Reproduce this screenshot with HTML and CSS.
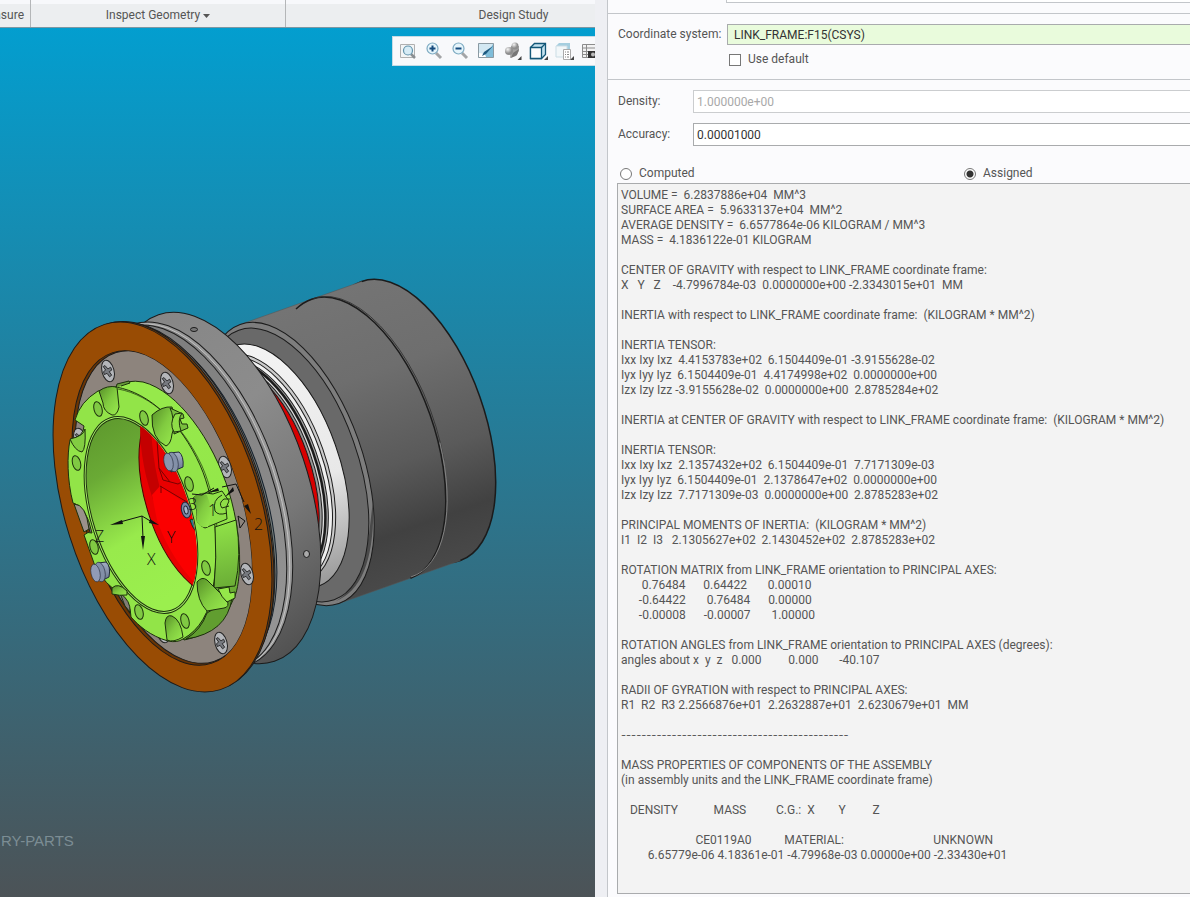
FILE: index.html
```html
<!DOCTYPE html>
<html lang="en">
<head>
<meta charset="utf-8">
<title>Mass Properties</title>
<link rel="stylesheet" href="styles.css">
</head>
<body>
<div class="app">
  <section class="workspace">
    <nav class="ribbon">
      <span class="group group-measure">Measure</span>
      <button class="group group-inspect" type="button">Inspect Geometry<svg width="7" height="4" viewBox="0 0 7 4"><path d="M0 0h7L3.500 4z" fill="#555"/></svg></button>
      <span class="group group-study">Design Study</span>
    </nav>
    <div class="viewport">
      <svg class="model" viewBox="0 28 595 869" preserveAspectRatio="xMinYMin meet" role="img" aria-label="Assembly model">
        <defs>
          <linearGradient id="body" gradientUnits="userSpaceOnUse" x1="0" y1="-148" x2="0" y2="148">
            <stop offset="0" stop-color="#747474"/><stop offset=".3" stop-color="#6e6e6e"/><stop offset=".62" stop-color="#5a5a5a"/><stop offset=".84" stop-color="#414141"/><stop offset="1" stop-color="#494949"/>
          </linearGradient>
          <linearGradient id="flange" gradientUnits="userSpaceOnUse" x1="180" y1="310" x2="300" y2="660">
            <stop offset="0" stop-color="#868686"/><stop offset=".35" stop-color="#8c8c8c"/><stop offset=".65" stop-color="#777"/><stop offset="1" stop-color="#4d4d4d"/>
          </linearGradient>
          <linearGradient id="groove" gradientUnits="userSpaceOnUse" x1="160" y1="320" x2="280" y2="660">
            <stop offset="0" stop-color="#7c7c7c"/><stop offset=".6" stop-color="#898989"/><stop offset="1" stop-color="#979797"/>
          </linearGradient>
          <linearGradient id="white" x1="0" y1="0" x2="0" y2="1">
            <stop offset="0" stop-color="#f4f4f4"/><stop offset=".6" stop-color="#e8e8e8"/><stop offset="1" stop-color="#999"/>
          </linearGradient>
          <linearGradient id="bore" gradientUnits="userSpaceOnUse" x1="105" y1="420" x2="150" y2="600">
            <stop offset="0" stop-color="#5f9a2e"/><stop offset=".25" stop-color="#6aaa35"/><stop offset=".62" stop-color="#98ea4c"/><stop offset="1" stop-color="#9bef4e"/>
          </linearGradient>
          <linearGradient id="side" gradientUnits="userSpaceOnUse" x1="180" y1="400" x2="225" y2="620">
            <stop offset="0" stop-color="#96e94b"/><stop offset=".55" stop-color="#93e649"/><stop offset=".8" stop-color="#72b83a"/><stop offset="1" stop-color="#5c962c"/>
          </linearGradient>
          <linearGradient id="notch" x1="0" y1="0" x2="1" y2="1">
            <stop offset="0" stop-color="#578f28"/><stop offset=".5" stop-color="#81cb40"/><stop offset="1" stop-color="#99eb4d"/>
          </linearGradient>
          <linearGradient id="pin" x1="0" y1="0" x2="0" y2="1">
            <stop offset="0" stop-color="#a4afc4"/><stop offset="1" stop-color="#66738e"/>
          </linearGradient>
          <clipPath id="boreClip"><ellipse cx="141" cy="515" rx="49" ry="101" transform="rotate(-17.6 141 515)"/></clipPath>
          <clipPath id="ringClip"><ellipse cx="162" cy="508" rx="79" ry="163" transform="rotate(-17.6 162 508)"/></clipPath>
          <g id="screw">
            <ellipse rx="6" ry="11" fill="#b4b6ba" stroke="#222"/>
            <path d="M-1.500-6l2 4 3-1 .5 3-3 1 1.500 4-2.500 1-1.500-4-3 .5v-3l2.500-1-1.500-4z" fill="#777a80" stroke="#222" stroke-width=".8"/>
          </g>
          <ellipse id="hole" rx="4" ry="7.500" fill="#80c943" stroke="#1d300d"/>
        </defs>

        <g stroke="#1b1b1b" stroke-width="1">
          <g transform="translate(411 421) rotate(-19.500)">
            <ellipse rx="73" ry="148" fill="url(#body)" stroke-width="1.500"/>
            <path d="M0-148H-128V148H0z" fill="url(#body)" stroke="none"/>
            <path d="M0-148h-128M0 148h-128" stroke="#555" stroke-width=".5"/>
            <path d="M-71-144Q-62-148-53-148A73 148 0 0 1-53 148" fill="none" stroke-width="1.500"/>
            <path d="M-51-148A73 148 0 0 1 18 48" fill="none" stroke="#333" stroke-width=".8"/>
            <path d="M20 30A72 147 0 0 1-52 147" fill="none" stroke="#8b8b8b" stroke-width=".8"/>
          </g>
          <ellipse cx="289.500" cy="464" rx="73" ry="148" transform="rotate(-19.500 289.500 464)" fill="#7d7d7d"/>
          <path d="M373 500Q376 585 336 601Q360 588 369 535z" fill="#4a4a4a" stroke="none"/>
          <ellipse cx="286.500" cy="465" rx="71" ry="143" transform="rotate(-19.500 286.500 465)" fill="#696969"/>
          <ellipse cx="276" cy="466" rx="63" ry="127.500" transform="rotate(-19.500 276 466)" fill="url(#white)"/>
          <g fill="none">
            <ellipse cx="268" cy="468" rx="58" ry="119" transform="rotate(-19.500 268 468)" fill="#ccc"/>
            <ellipse cx="266" cy="469" rx="57" ry="117" transform="rotate(-19.500 266 469)" fill="#f0f0f0"/>
            <ellipse cx="263" cy="470" rx="56" ry="115" transform="rotate(-19.500 263 470)" fill="#aaa"/>
            <ellipse cx="261" cy="470" rx="55" ry="114" transform="rotate(-19.500 261 470)" stroke-width="2.500" fill="#ddd"/>
            <ellipse cx="258" cy="471" rx="55" ry="113" transform="rotate(-19.500 258 471)" fill="#999"/>
            <ellipse cx="255" cy="471" rx="55" ry="113" transform="rotate(-19.500 255 471)" fill="#d80000"/>
          </g>

          <ellipse cx="216.500" cy="488" rx="91.500" ry="182.700" transform="rotate(-18.500 216.500 488)" fill="url(#flange)"/>
          <ellipse cx="190" cy="495" rx="90" ry="180" transform="rotate(-18.500 190 495)" fill="#999"/>
          <ellipse cx="188" cy="496" rx="89" ry="179" transform="rotate(-18.500 188 496)" fill="url(#groove)" stroke="#ddd" stroke-width=".6"/>
          <ellipse cx="185" cy="497" rx="89" ry="179" transform="rotate(-18.500 185 497)" fill="url(#groove)"/>
          <ellipse cx="175" cy="500" rx="89" ry="180" transform="rotate(-18.500 175 500)" fill="#737b7a" stroke="#14202c"/>
          <path d="M217 400Q269 482 273 555" fill="none" stroke="#51a62c" stroke-width="1.500"/>
          <ellipse cx="168" cy="504" rx="95" ry="188" transform="rotate(-17.600 168 504)" fill="#777168"/>
          <ellipse cx="165" cy="506" rx="97" ry="191" transform="rotate(-17.600 165 506)" fill="#6e3a0b"/>
          <ellipse cx="162.500" cy="507" rx="97.400" ry="191.600" transform="rotate(-17.600 162.500 507)" fill="#994c04"/>
          <ellipse cx="162" cy="508" rx="79" ry="163" transform="rotate(-17.600 162 508)" fill="#6a3504"/>
          <g clip-path="url(#ringClip)"><ellipse cx="165" cy="507" rx="79" ry="162" transform="rotate(-17.600 165 507)" fill="#8d847d"/></g>
          <ellipse cx="306.500" cy="554" rx="3" ry="3.500" fill="#aaa"/>
          <ellipse cx="194" cy="329.500" rx="3.500" ry="2" fill="#777"/>
        </g>

        <g>
          <use href="#screw" transform="translate(108 371) rotate(-15)"/>
          <use href="#screw" transform="translate(167 383) rotate(-15)"/>
          <use href="#screw" transform="translate(225 467) rotate(-15)"/>
          <use href="#screw" transform="translate(247 574) rotate(-15)"/>
          <use href="#screw" transform="translate(221 643) rotate(-15)"/>
          <use href="#screw" transform="translate(80 439) rotate(-15)"/>
          <use href="#screw" transform="translate(163 632) rotate(-15)"/>
        </g>

        <g stroke="#1d300d" stroke-width="1" stroke-linejoin="round">
          <path d="M116 387Q127 379 143 382C178 391 213 440 229 492C245 545 240 590 233 600C222 626 207 635 184 640L160 600 130 400z" fill="url(#side)"/>
          <path d="M75 420Q80 402 98 391L116 387C150 393 181 423 200 465C217 503 219 555 213 588Q208 625 183 639Q177 643 168 641C150 636 138 625 131 617Q131 603 119 592Q106 586 95 566L84 535Q88 531 92 533Q86 505 73 503C67 480 67 455 70 440Q84 436 84 426z" fill="#92e448"/>
          <path d="M118 389C152 395 183 425 202 466C219 504 221 555 215 588" fill="none" stroke-width=".7"/>
          <path d="M215 527L236 520Q242 556 235 586L214 588Q217 557 215 527z" fill="url(#side)"/>
          <path d="M207 613L232 598Q227 633 186 639Q201 630 207 613z" fill="#619e30"/>
          <path d="M74 504Q86 504 89 529L84 532Z" fill="#9a928b"/>
          <path d="M120 593Q131 601 130 612L125 606z" fill="#817b77"/>

          <ellipse cx="141" cy="515" rx="50" ry="102" transform="rotate(-17.600 141 515)" fill="#a7ef68"/>
          <ellipse cx="141" cy="515" rx="48" ry="100" transform="rotate(-17.600 141 515)" fill="url(#bore)"/>
          <g clip-path="url(#boreClip)">
            <ellipse cx="195" cy="498" rx="49" ry="102" transform="rotate(-17.600 195 498)" fill="#e80000" stroke="#4c0000"/>
            <path d="M140 426C140 470 155 525 199 586L204 580C165 525 153 475 151 426z" fill="#c40000" stroke="none"/>
            <path d="M157 520Q170 558 198 586L202 540 188 505 160 486 152 495z" fill="#fb0000" stroke="none"/>
            <path d="M157 440L159 468 163 480 178 484 189 478M159 468L170 482M161 486V493M160 486L187 502" fill="none" stroke="#790000"/>
            <path d="M192 519L198 526V533Q193 530 190 520z" fill="#277b93"/>
          </g>

          <path d="M99 391Q107 385 117 387L119 407Q117 416 112 415Q103 411 103 403z" fill="url(#notch)"/>
          <path d="M116 388L117 384 129 381 130 383 121 386" fill="#689b3a"/>
          <path d="M152 415Q162 406 172 407Q177 422 172 434Q171 444 166 446Q151 439 152 415z" fill="url(#notch)"/>
          <path d="M170 408L183 414 184 418 180 419 182 424 187 424 188 428 174 434Q174 416 170 408z" fill="#79be3e"/>
          <path d="M175 414Q169 424 174 432L181 431Q177 420 182 413z" fill="#8fde48"/>
          <path d="M70 439Q84 436 85 429Q86 449 82 452Q75 451 70 439z" fill="#82cc42"/>
          <path d="M112 588Q118 582 127 591V595Q120 596 112 594z" fill="url(#notch)"/>
          <path d="M165 623Q166 614 172 616Q181 620 183 637Q173 643 167 640z" fill="url(#notch)"/>
          <path d="M197 582Q202 576 207 580L227 600Q230 607 224 608L207 611Q197 601 197 582z" fill="url(#notch)"/>
          <path d="M218 589L229 587 230 593 235 592V598L227 602Q222 598 218 589z" fill="#95e84a"/>
          <path d="M193 498Q200 491 213 494L222 491 229 501 226 508 227 519 205 528Q194 524 197 511z" fill="#8fdf47"/>
          <path d="M193 498Q200 491 207 495Q214 512 208 527H203Q194 524 197 511z" fill="url(#notch)" stroke="none"/>
          <path d="M222 495Q212 500 215 511Q218 516 227 513M230 499H224Q218 503 222 508L229 506" fill="none"/>
          <path d="M192 494L202 495 214 488" fill="none" stroke="#111"/>

          <use href="#hole" transform="translate(98 409) rotate(-15)"/>
          <use href="#hole" transform="translate(144 418) rotate(-15)"/>
          <use href="#hole" transform="translate(76.500 463) rotate(-15)"/>
          <use href="#hole" transform="translate(189 484) rotate(-15)"/>
          <use href="#hole" transform="translate(94 547) rotate(-15)"/>
          <use href="#hole" transform="translate(139 612) rotate(-15)"/>
          <use href="#hole" transform="translate(185 621) rotate(-15)"/>
          <use href="#hole" transform="translate(206 568) rotate(-15)"/>
        </g>

        <g stroke="#222a3a" stroke-width="1">
          <path d="M169 453L179 452Q184 456 183 467L171 472z" fill="url(#pin)"/>
          <ellipse cx="173" cy="462" rx="5" ry="10" transform="rotate(-12 173 462)" fill="#8390a8" stroke-width=".6"/>
          <ellipse cx="168.500" cy="462" rx="4.500" ry="9" transform="rotate(-12 168.500 462)" fill="#8995ae" stroke-width=".6"/>
          <path d="M98 563L106 562Q111 566 109 577L101 581z" fill="url(#pin)"/>
          <ellipse cx="100" cy="572" rx="5" ry="10" transform="rotate(-12 100 572)" fill="#8390a8" stroke-width=".6"/>
          <ellipse cx="95.500" cy="573" rx="4.500" ry="9" transform="rotate(-12 95.500 573)" fill="#919bb6" stroke-width=".6"/>
          <ellipse cx="186" cy="510" rx="4.500" ry="8" transform="rotate(-12 186 510)" fill="#7787a5"/>
          <ellipse cx="186" cy="510" rx="2" ry="4" transform="rotate(-12 186 510)" fill="#a9b7cb"/>
        </g>

        <g stroke="#111" fill="#111">
          <path d="M142 516L120 522M142 516L143 538M142 516L152 522M236 484L222 487M236 484L244 502" fill="none"/>
          <path d="M110 525l12-5 1 4zM143 550l-2-14h4zM159 525l-9-6-1 4zM207 493l11-5 1 3zM251 514l-7-8 4-2zM225 497l8-10 1 4z" stroke="none"/>
          <path d="M238 516L240 528 245 521z" fill="none"/>
        </g>
        <g class="axis">
          <text x="95" y="542">Z</text><text x="147" y="565">X</text><text x="167" y="543">Y</text>
          <text x="188" y="510">3</text><text x="208" y="516">1</text><text x="254" y="530">2</text>
        </g>
        <text class="watermark" x="1" y="846">RY-PARTS</text>
      </svg>

      <div class="toolbar">
        <button type="button" aria-label="Refit"><svg viewBox="0 0 20 20"><path d="M2.500 3.500h14v13h-14z" fill="#f3f5f6" stroke="#b0b0b0"/><path d="M13 13l4 4" stroke="#8a8f93" stroke-width="2.500"/><circle cx="10" cy="9.500" r="4.500" fill="#d7ecf6" stroke="#6293ab" stroke-width="1.200"/></svg></button>
        <button type="button" aria-label="Zoom in"><svg viewBox="0 0 20 20"><path d="M12 12l5 5" stroke="#a3a5a7" stroke-width="3"/><circle cx="8.500" cy="7.500" r="5.500" fill="#e6f5fb" stroke="#7eabc2" stroke-width="1.200"/><path d="M5.500 7.500h6M8.500 4.500v6" stroke="#164b7e" stroke-width="2"/></svg></button>
        <button type="button" aria-label="Zoom out"><svg viewBox="0 0 20 20"><path d="M12 12l5 5" stroke="#a3a5a7" stroke-width="3"/><circle cx="8.500" cy="7.500" r="5.500" fill="#e6f5fb" stroke="#7eabc2" stroke-width="1.200"/><path d="M5.500 7.500h6" stroke="#164b7e" stroke-width="2"/></svg></button>
        <button type="button" aria-label="Repaint"><svg viewBox="0 0 20 20"><path d="M2.500 2.500h15v14h-15z" fill="#7fbdd9" stroke="#8b9aa2"/><path d="M3 3h14Q14 11 3 14z" fill="#d3e8f2"/><path d="M3 12l6 1 1 3H3z" fill="#fff"/><path d="M17 5L10 13l-4 2 2-4z" fill="#1d5a80"/></svg></button>
        <button type="button" aria-label="Shading"><svg viewBox="0 0 20 20"><defs><radialGradient id="ball" cx=".35" cy=".3"><stop offset="0" stop-color="#f5f5f5"/><stop offset="1" stop-color="#8e8e8e"/></radialGradient></defs><path d="M9 5h8v5l-3 5-6 2z" fill="#a2a2a2"/><path d="M11 12l6-4-2 6-6 3z" fill="#777"/><circle cx="13" cy="5" r="3.500" fill="url(#ball)"/><circle cx="7" cy="10" r="4" fill="url(#ball)"/><path d="M19.500 15v4h-4z" fill="#444"/></svg></button>
        <button type="button" aria-label="Display style"><svg viewBox="0 0 20 20"><path d="M2.500 6.500l4-4h11v11l-4 4h-11z" fill="#c3e2ef" stroke="#135778" stroke-width="1.300"/><path d="M2.500 6.500h11v11h-11z" fill="#fafcfd" stroke="#135778" stroke-width="1.300"/><path d="M13.500 6.500l4-4" stroke="#135778" stroke-width="1.300"/><path d="M20 15v4h-4z" fill="#444"/></svg></button>
        <button type="button" aria-label="Saved views"><svg viewBox="0 0 20 20"><path d="M2 5l3-3h11v11l-3 3H2z" fill="#a5cedf"/><path d="M2 5h11v11H2z" fill="#f2f7f9" stroke="#cbdde5"/><path d="M9.500 8.500h7v10h-7z" fill="#fff" stroke="#aaa"/><path d="M11 11h1m1 0h2M11 13.500h1m1 0h2M11 16h1m1 0h2" stroke="#888"/><path d="M20 15v4h-4z" fill="#444"/></svg></button>
        <button type="button" aria-label="View manager"><svg viewBox="0 0 20 20"><path d="M2.500 3.500h14v13h-14zM6.500 3.500v13M2.500 7h14M2.500 10.500h14M2.500 13.500h14" fill="#f2f2f2" stroke="#8c8c8c"/><path d="M8 10h10v7H8z" fill="#333"/><circle cx="13" cy="13.500" r="2" fill="#bbb"/></svg></button>
      </div>
    </div>
  </section>

  <main class="panel">
    <div class="previous"><div class="previous-box"></div></div>
    <section class="csys">
      <label for="csys">Coordinate system:</label>
      <input id="csys" class="csys-input" type="text" value="LINK_FRAME:F15(CSYS)">
      <label class="choice default"><input type="checkbox"> Use default</label>
    </section>
    <section class="settings">
      <label for="density">Density:</label>
      <input id="density" type="text" value="1.000000e+00" disabled>
      <label for="accuracy">Accuracy:</label>
      <input id="accuracy" type="text" value="0.00001000">
    </section>
    <div class="modes">
      <label class="choice"><input type="radio" name="mode"> Computed</label>
      <label class="choice"><input type="radio" name="mode" checked> Assigned</label>
    </div>
    <pre class="report">VOLUME =  6.2837886e+04  MM^3
SURFACE AREA =  5.9633137e+04  MM^2
AVERAGE DENSITY =  6.6577864e-06 KILOGRAM / MM^3
MASS =  4.1836122e-01 KILOGRAM

CENTER OF GRAVITY with respect to LINK_FRAME coordinate frame:
X   Y   Z    -4.7996784e-03  0.0000000e+00 -2.3343015e+01  MM

INERTIA with respect to LINK_FRAME coordinate frame:  (KILOGRAM * MM^2)

INERTIA TENSOR:
Ixx Ixy Ixz  4.4153783e+02  6.1504409e-01 -3.9155628e-02
Iyx Iyy Iyz  6.1504409e-01  4.4174998e+02  0.0000000e+00
Izx Izy Izz -3.9155628e-02  0.0000000e+00  2.8785284e+02

INERTIA at CENTER OF GRAVITY with respect to LINK_FRAME coordinate frame:  (KILOGRAM * MM^2)

INERTIA TENSOR:
Ixx Ixy Ixz  2.1357432e+02  6.1504409e-01  7.7171309e-03
Iyx Iyy Iyz  6.1504409e-01  2.1378647e+02  0.0000000e+00
Izx Izy Izz  7.7171309e-03  0.0000000e+00  2.8785283e+02

PRINCIPAL MOMENTS OF INERTIA:  (KILOGRAM * MM^2)
I1  I2  I3   2.1305627e+02  2.1430452e+02  2.8785283e+02

ROTATION MATRIX from LINK_FRAME orientation to PRINCIPAL AXES:
       0.76484      0.64422       0.00010
      -0.64422       0.76484      0.00000
      -0.00008      -0.00007       1.00000

ROTATION ANGLES from LINK_FRAME orientation to PRINCIPAL AXES (degrees):
angles about x  y  z   0.000         0.000       -40.107

RADII OF GYRATION with respect to PRINCIPAL AXES:
R1  R2  R3 2.2566876e+01  2.2632887e+01  2.6230679e+01  MM

<span class="rule">---------------------------------------------</span>

MASS PROPERTIES OF COMPONENTS OF THE ASSEMBLY
(in assembly units and the LINK_FRAME coordinate frame)

   DENSITY            MASS          C.G.:  X        Y         Z

                         CE0119A0           MATERIAL:                              UNKNOWN
         6.65779e-06 4.18361e-01 -4.79968e-03 0.00000e+00 -2.33430e+01</pre>
  </main>
</div>
</body>
</html>
```
FILE: styles.css
```css
* { box-sizing: border-box; }

body {
  margin: 0;
  font: 12px/15px Roboto, "Open Sans", sans-serif;
  color: #555;
  background: #fbfbfd;
}

.app {
  display: grid;
  grid-template-columns: 1fr 1fr;
  min-height: 100vh;
  overflow: hidden;
}

.workspace {
  display: flex;
  flex-direction: column;
  min-width: 0;
}

.ribbon {
  display: flex;
  height: 28px;
  overflow: hidden;
  background: linear-gradient(#f7f8fb 4px, #eceef0 4px);
  border-bottom: 1px solid #7d97a3;
}

.group {
  display: flex;
  flex: none;
  align-items: center;
  justify-content: center;
  gap: 3px;
  padding: 4px 0 0;
  font: inherit;
  color: inherit;
  background: none;
  border: 0;
  border-right: 1px solid #b4b6b8;
}

.group-measure {
  width: 31px;
  justify-content: flex-end;
  padding-right: 6px;
  overflow: hidden;
}

.group-inspect { width: 255px; }
.group-study { width: 456px; }

.viewport {
  position: relative;
  flex: 1;
  overflow: hidden;
  background: linear-gradient(#039ecf, #188aae 27%, #4c5357);
}

.model {
  display: block;
  width: 100%;
}

.axis {
  font: 16px "Open Sans", sans-serif;
  font-weight: 300;
  fill: #111;
}

.watermark {
  font: 15px "Liberation Sans", sans-serif;
  fill: #7c8d94;
}

.toolbar {
  position: absolute;
  top: 8px;
  right: 0;
  display: flex;
  gap: 6px;
  width: 203px;
  padding: 4px 5px;
  overflow: hidden;
  background: #f8f9fb;
  border: 1px solid #c5dbe5;
  border-right: 0;
}

.toolbar button {
  flex: none;
  width: 20px;
  height: 20px;
  padding: 0;
  background: none;
  border: 0;
}

.toolbar svg {
  display: block;
  width: 20px;
  height: 20px;
}

.panel {
  display: flex;
  flex-direction: column;
  min-width: 0;
  padding-bottom: 3px;
  border-left: 12px solid #eeeff3;
  box-shadow: inset 1px 0 #c3c6ca;
}

.panel > * { margin-left: 1px; }

.previous {
  height: 14px;
  padding-left: 118px;
  border-bottom: 1px solid #c3c6ca;
}

.previous-box {
  height: 3px;
  background: #fff;
  border: 1px solid #c3c6ca;
  border-width: 0 0 1px 1px;
}

input[type="text"] {
  width: 100%;
  height: 23px;
  padding: 0 3px;
  font: inherit;
  color: #333;
  background: #fff;
  border: 1px solid #a9abad;
  border-right: 0;
}

input[type="text"]:disabled {
  color: #a9a9a9;
  border-color: #cbcdcf;
}

.csys {
  display: grid;
  grid-template-columns: 109px 1fr;
  align-items: center;
  padding: 10px 0 10px 10px;
  row-gap: 5px;
  border-bottom: 1px solid #c3c6ca;
}

.csys input.csys-input {
  height: 21px;
  padding-left: 6px;
  background: #e9fbdc;
}

.choice {
  display: flex;
  align-items: center;
  gap: 7px;
}

.default {
  grid-column: 2;
  height: 19px;
  padding-left: 2px;
}

.choice input {
  appearance: none;
  width: 12px;
  height: 12px;
  margin: 0;
  background: #fff;
  border: 1px solid #777;
}

.choice input[type="radio"] { border-radius: 50%; }

.choice input[type="radio"]:checked {
  background: radial-gradient(circle, #333 3px, #fff 4px);
}

.settings {
  display: grid;
  grid-template-columns: 75px 1fr;
  align-items: center;
  row-gap: 10px;
  padding: 10px 0 0 10px;
}

.modes {
  display: grid;
  grid-template-columns: 344px 1fr;
  padding: 20px 0 2px 12px;
}

.panel .report {
  flex: 1;
  margin: 0 0 0 10px;
  padding: 4px 3px 3px;
  font: inherit;
  background: #f3f3f3;
  border: 1px solid #a9abad;
  border-right: 0;
}

.rule {
  font-family: Inter, sans-serif;
  font-size: 11px;
}
```
